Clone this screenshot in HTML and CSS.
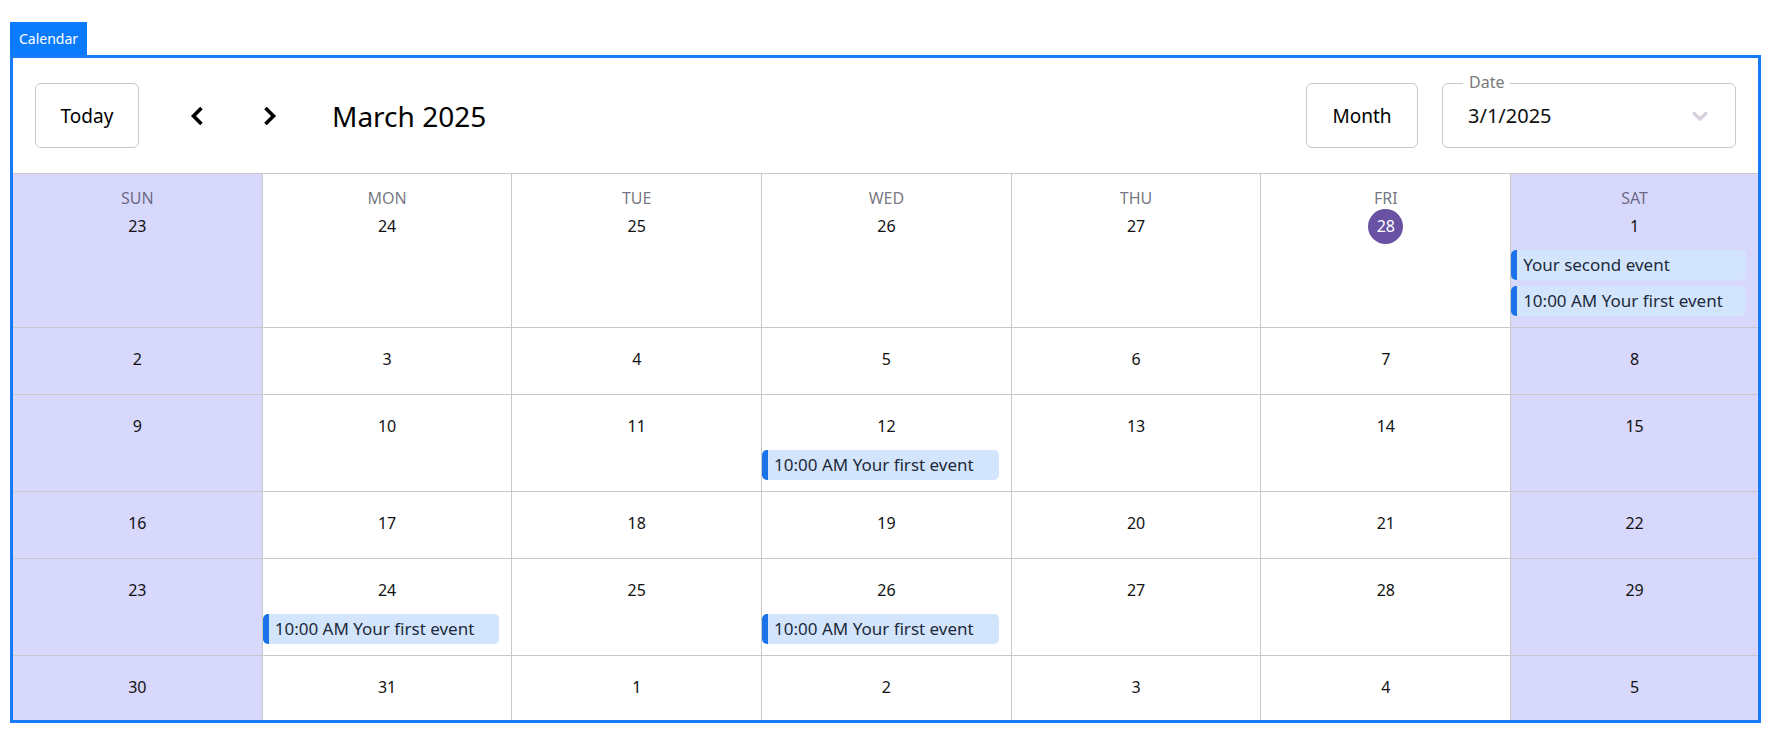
FILE: index.html
```html
<!DOCTYPE html>
<html lang="en">
<head>
<meta charset="utf-8">
<title>Calendar</title>
<link rel="stylesheet" href="styles.css">
</head>
<body>
<div class="page">
  <div class="tab">Calendar</div>
  <div class="frame">
    <div class="toolbar">
      <button class="btn btn-today">Today</button>
      <button class="nav nav-prev" aria-label="Previous">
        <svg width="14" height="20" viewBox="0 0 14 20"><path d="M11.5 2 L3.5 10 L11.5 18" fill="none" stroke="#000" stroke-width="3.6"/></svg>
      </button>
      <button class="nav nav-next" aria-label="Next">
        <svg width="14" height="20" viewBox="0 0 14 20"><path d="M2.5 2 L10.5 10 L2.5 18" fill="none" stroke="#000" stroke-width="3.6"/></svg>
      </button>
      <div class="title">March 2025</div>
      <div class="spacer"></div>
      <button class="btn btn-month">Month</button>
      <div class="datefield">
        <span class="datefield-label">Date</span>
        <span class="datefield-value">3/1/2025</span>
        <svg class="datefield-arrow" width="18" height="12" viewBox="0 0 18 12"><path d="M2 2.5 L9 9 L16 2.5" fill="none" stroke="#d6d1dc" stroke-width="3.4"/></svg>
      </div>
    </div>
    <div class="grid">
      <!-- row 1 -->
      <div class="cell weekend"><div class="dow">SUN</div><div class="num">23</div><div class="events"></div></div>
      <div class="cell"><div class="dow">MON</div><div class="num">24</div><div class="events"></div></div>
      <div class="cell"><div class="dow">TUE</div><div class="num">25</div><div class="events"></div></div>
      <div class="cell"><div class="dow">WED</div><div class="num">26</div><div class="events"></div></div>
      <div class="cell"><div class="dow">THU</div><div class="num">27</div><div class="events"></div></div>
      <div class="cell"><div class="dow">FRI</div><div class="num"><span class="today">28</span></div><div class="events"></div></div>
      <div class="cell weekend last-col"><div class="dow">SAT</div><div class="num">1</div>
        <div class="events">
          <div class="event">Your second event</div>
          <div class="event">10:00 AM Your first event</div>
        </div>
      </div>
      <!-- row 2 -->
      <div class="cell weekend"><div class="num">2</div><div class="events"></div></div>
      <div class="cell"><div class="num">3</div><div class="events"></div></div>
      <div class="cell"><div class="num">4</div><div class="events"></div></div>
      <div class="cell"><div class="num">5</div><div class="events"></div></div>
      <div class="cell"><div class="num">6</div><div class="events"></div></div>
      <div class="cell"><div class="num">7</div><div class="events"></div></div>
      <div class="cell weekend last-col"><div class="num">8</div><div class="events"></div></div>
      <!-- row 3 -->
      <div class="cell weekend"><div class="num">9</div><div class="events"></div></div>
      <div class="cell"><div class="num">10</div><div class="events"></div></div>
      <div class="cell"><div class="num">11</div><div class="events"></div></div>
      <div class="cell"><div class="num">12</div><div class="events"><div class="event">10:00 AM Your first event</div></div></div>
      <div class="cell"><div class="num">13</div><div class="events"></div></div>
      <div class="cell"><div class="num">14</div><div class="events"></div></div>
      <div class="cell weekend last-col"><div class="num">15</div><div class="events"></div></div>
      <!-- row 4 -->
      <div class="cell weekend"><div class="num">16</div><div class="events"></div></div>
      <div class="cell"><div class="num">17</div><div class="events"></div></div>
      <div class="cell"><div class="num">18</div><div class="events"></div></div>
      <div class="cell"><div class="num">19</div><div class="events"></div></div>
      <div class="cell"><div class="num">20</div><div class="events"></div></div>
      <div class="cell"><div class="num">21</div><div class="events"></div></div>
      <div class="cell weekend last-col"><div class="num">22</div><div class="events"></div></div>
      <!-- row 5 -->
      <div class="cell weekend"><div class="num">23</div><div class="events"></div></div>
      <div class="cell"><div class="num">24</div><div class="events"><div class="event">10:00 AM Your first event</div></div></div>
      <div class="cell"><div class="num">25</div><div class="events"></div></div>
      <div class="cell"><div class="num">26</div><div class="events"><div class="event">10:00 AM Your first event</div></div></div>
      <div class="cell"><div class="num">27</div><div class="events"></div></div>
      <div class="cell"><div class="num">28</div><div class="events"></div></div>
      <div class="cell weekend last-col"><div class="num">29</div><div class="events"></div></div>
      <!-- row 6 -->
      <div class="cell weekend last-row"><div class="num">30</div><div class="events"></div></div>
      <div class="cell last-row"><div class="num">31</div><div class="events"></div></div>
      <div class="cell last-row"><div class="num">1</div><div class="events"></div></div>
      <div class="cell last-row"><div class="num">2</div><div class="events"></div></div>
      <div class="cell last-row"><div class="num">3</div><div class="events"></div></div>
      <div class="cell last-row"><div class="num">4</div><div class="events"></div></div>
      <div class="cell weekend last-col last-row"><div class="num">5</div><div class="events"></div></div>
    </div>
  </div>
</div>
</body>
</html>
```

FILE: styles.css
```css
* { box-sizing: border-box; }

html, body {
  margin: 0;
  padding: 0;
  background: #fff;
}

body {
  font-family: "Noto Sans", "Open Sans", sans-serif;
  color: #000;
}

.page {
  padding: 22px 9px 0 10px;
}

.tab {
  display: inline-block;
  height: 33px;
  line-height: 33px;
  padding: 0 9px;
  background: #0b7bfe;
  color: #fff;
  font-size: 14px;
  vertical-align: top;
}

.frame {
  border: 3px solid #1a7bf6;
}

.toolbar {
  display: flex;
  align-items: center;
  height: 116px;
  padding: 0 22px 0 22px;
  border-bottom: 1px solid #c8c8c8;
}

button {
  font-family: inherit;
  cursor: pointer;
}

.btn {
  height: 65px;
  background: #fff;
  border: 1px solid #c8c8c8;
  border-radius: 6px;
  font-size: 19px;
  color: #000;
  padding: 0;
}

.btn-today {
  width: 104px;
}

.btn-month {
  width: 112px;
  margin-right: 24px;
}

.nav {
  background: none;
  border: none;
  padding: 0;
  width: 40px;
  height: 40px;
  display: flex;
  align-items: center;
  justify-content: center;
}

.nav-prev {
  margin-left: 38px;
}

.nav-next {
  margin-left: 33px;
}

.title {
  margin-left: 42px;
  font-size: 28px;
  line-height: 1;
}

.spacer {
  flex: 1;
}

.datefield {
  position: relative;
  width: 294px;
  height: 65px;
  border: 1px solid #c8c8c8;
  border-radius: 6px;
  display: flex;
  align-items: center;
  padding: 0 26px 0 25px;
}

.datefield-label {
  position: absolute;
  left: 20px;
  top: -13px;
  padding: 0 6px;
  background: #fff;
  color: #7a7a7a;
  font-size: 16px;
  line-height: 22px;
}

.datefield-value {
  flex: 1;
  font-size: 20px;
  color: #111;
}

.grid {
  display: grid;
  grid-template-columns: repeat(6, 249.7px) 1fr;
}

.cell {
  border-right: 1px solid #c8c8c8;
  border-bottom: 1px solid #c8c8c8;
  text-align: center;
  padding: 14px 0 11px 0;
  font-size: 16px;
  background: #fff;
}

.cell.weekend {
  background: #d8d7fc;
}

.cell.last-col {
  border-right: none;
}

.cell.last-row {
  border-bottom: none;
  padding-bottom: 9px;
}

.dow {
  font-size: 16px;
  line-height: 21px;
  color: rgba(40, 40, 60, 0.65);
}

.num {
  height: 35px;
  line-height: 35px;
  color: #111;
}

.today {
  display: inline-block;
  width: 35px;
  height: 35px;
  border-radius: 50%;
  background: #6951a3;
  color: #fff;
  line-height: 35px;
}

.events {
  margin-top: 6px;
  padding-right: 12px;
  display: flex;
  flex-direction: column;
  gap: 6px;
}

.event {
  height: 30px;
  line-height: 30px;
  background: #d3e5fd;
  border-left: 6px solid #1a73e8;
  border-radius: 5px;
  padding-left: 6px;
  text-align: left;
  font-size: 17px;
  color: #1c2a3c;
  white-space: nowrap;
  overflow: hidden;
}
```
